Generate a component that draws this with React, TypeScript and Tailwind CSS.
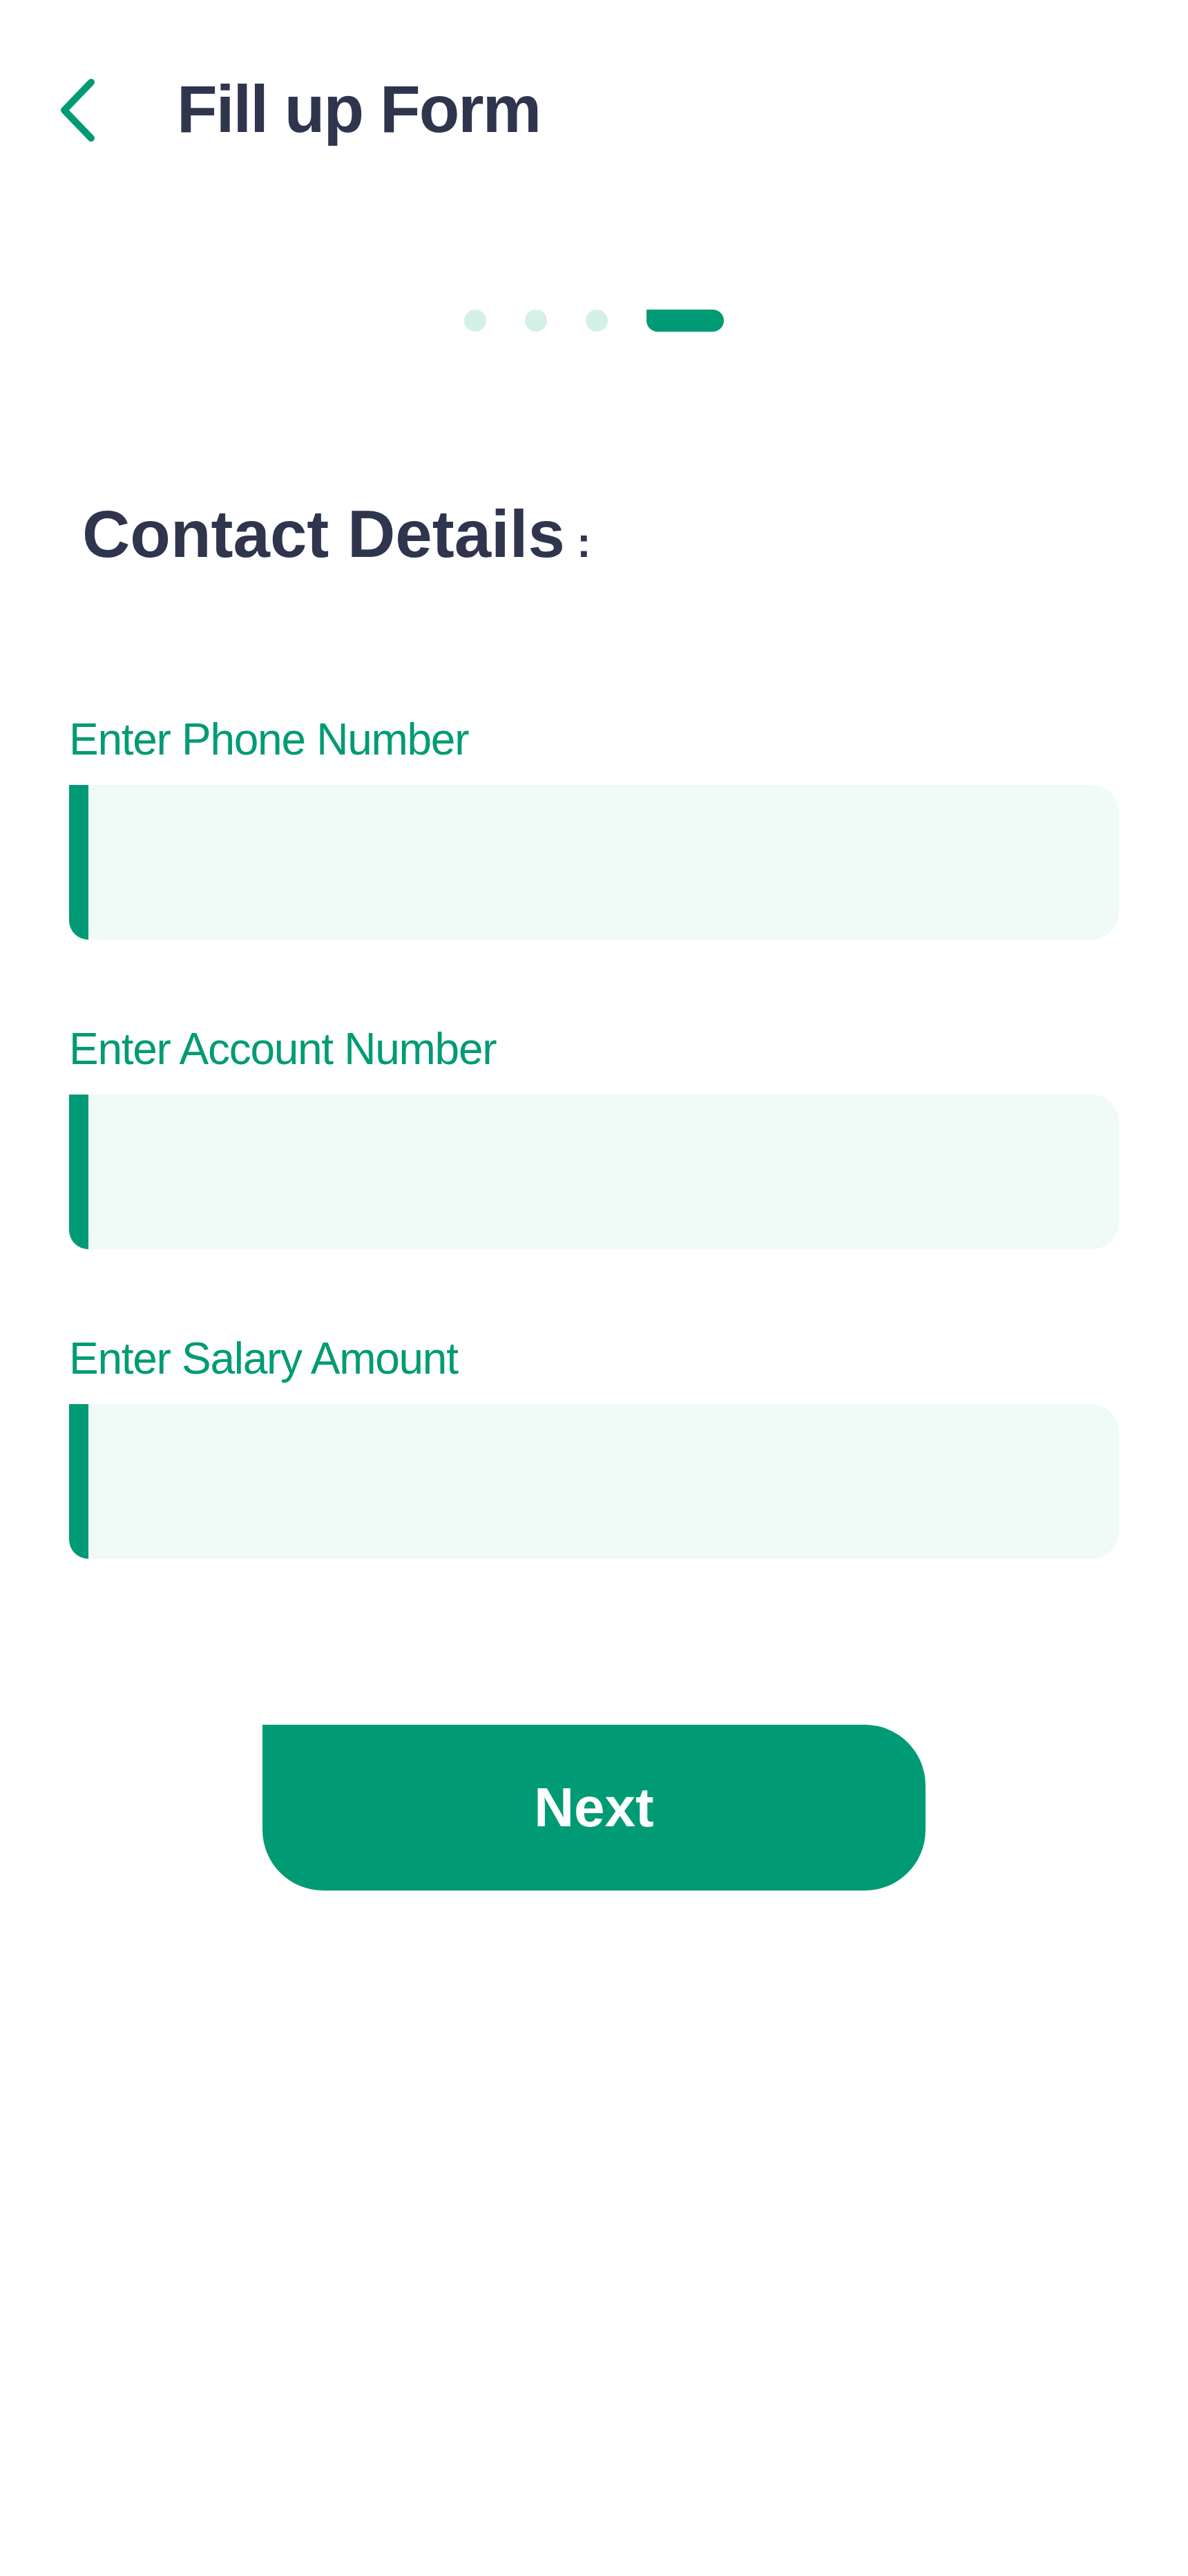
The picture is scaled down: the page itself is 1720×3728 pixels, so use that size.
import React from "react";

const fields = ["Enter Phone Number", "Enter Account Number", "Enter Salary Amount"];

function BackChevron() {
  return (
    <svg width="51" height="91" viewBox="0 0 51 91" fill="none" className="mt-[4px] shrink-0">
      <path d="M46 5 L7 45.5 L46 86" stroke="#009B74" strokeWidth="10" strokeLinecap="round" strokeLinejoin="round" />
    </svg>
  );
}

function Field({ label }: { label: string }) {
  return (
    <div className="flex flex-col">
      <label className="text-[64px] leading-[64px] tracking-[-0.02em] text-[#009B74]">{label}</label>
      <div className="mt-[34px] flex h-[224px] overflow-hidden rounded-[40px] rounded-tl-none rounded-bl-[28px] bg-[#F0FAF6]">
        <div className="w-[28px] bg-[#009B74]" />
        <input className="flex-1 bg-transparent px-[40px] text-[60px] outline-none" />
      </div>
    </div>
  );
}

export default function App() {
  return (
    <div className="min-h-[3728px] w-[1720px] bg-white font-['Liberation_Sans',Arial,sans-serif]">
      {/* Header */}
      <div className="flex items-start pl-[86px] pt-[110px]">
        <BackChevron />
        <h1 className="ml-[119px] text-[96px] font-bold leading-[96px] tracking-[-0.02em] text-[#2F354D]">
          Fill up Form
        </h1>
      </div>

      {/* Step indicator */}
      <div className="mt-[242px] flex items-center justify-center gap-[56px]">
        <span className="h-[32px] w-[32px] rounded-full bg-[#D5F0E7]" />
        <span className="h-[32px] w-[32px] rounded-full bg-[#D5F0E7]" />
        <span className="h-[32px] w-[32px] rounded-full bg-[#D5F0E7]" />
        <span className="h-[32px] w-[112px] rounded-full rounded-tl-none bg-[#009B74]" />
      </div>

      {/* Section title */}
      <h2 className="mt-[245px] h-[96px] pl-[119px] text-[96px] font-bold leading-[96px] text-[#2F354D]">
        Contact Details<span className="text-[62px] leading-none"> :</span>
      </h2>

      {/* Form */}
      <div className="mt-[217px] flex flex-col gap-[126px] px-[100px]">
        {fields.map((f) => (
          <Field key={f} label={f} />
        ))}
      </div>

      <div className="mt-[240px] flex justify-center">
        <button className="flex h-[240px] w-[960px] items-center justify-center rounded-[88px] rounded-tl-none bg-[#009B74] text-[80px] font-bold text-white">
          Next
        </button>
      </div>
    </div>
  );
}
